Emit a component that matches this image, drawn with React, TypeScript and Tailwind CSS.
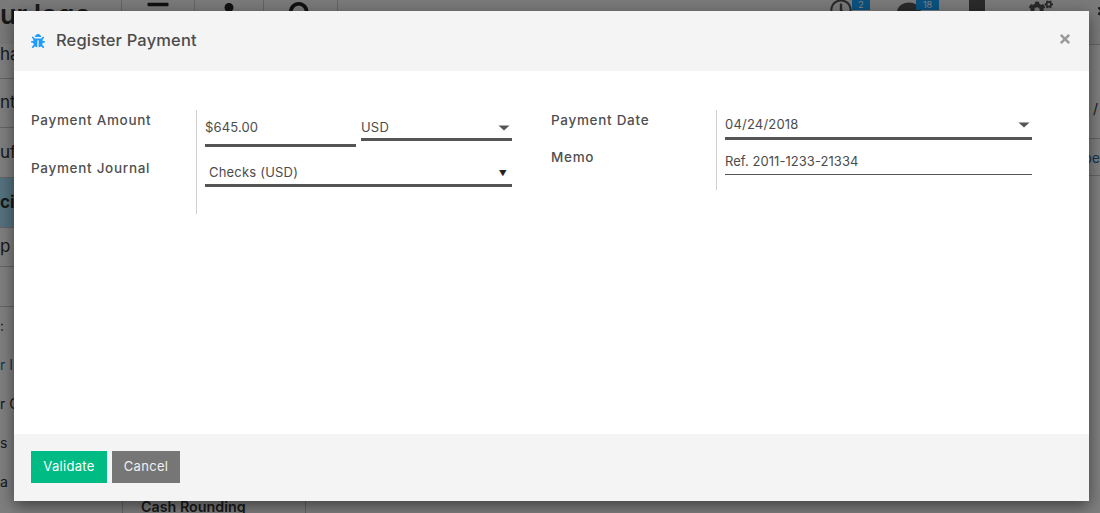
import React from "react";
import { FaBug, FaRegClock, FaComment, FaCogs, FaSearch, FaUser, FaBars, FaTimes } from "react-icons/fa";

function Arrow() {
  return (
    <svg width="12" height="6" viewBox="0 0 12 6" className="shrink-0">
      <path d="M0.5 0.5h11L6 5.5z" fill="#555" />
    </svg>
  );
}

function SideRow({ text, h, className = "" }: { text: string; h: string; className?: string }) {
  return (
    <div className={`${h} flex items-center border-b border-[#c9c9c9] text-[17px] text-[#333] ${className}`}>
      <span className="whitespace-nowrap">{text}</span>
    </div>
  );
}

function Background() {
  return (
    <div className="h-[513px] w-[1100px] overflow-hidden bg-white font-['Inter',sans-serif]">
      <div className="flex h-[44px] items-start overflow-hidden bg-[#f4f4f4]">
        <div className="w-[121px] shrink-0 overflow-hidden whitespace-nowrap text-[27px] font-semibold leading-[30px] text-[#333]">ur logo</div>
        <div className="flex h-full w-[73px] shrink-0 justify-center border-l border-[#c9c9c9] text-[#222]">
          <FaBars size={24} className="mt-[-15px]" />
        </div>
        <div className="flex h-full w-[69px] shrink-0 justify-center border-l border-[#c9c9c9] text-[#222]">
          <FaUser size={18} className="mt-[3px]" />
        </div>
        <div className="flex h-full w-[75px] shrink-0 justify-center border-x border-[#c9c9c9] text-[#222]">
          <FaSearch size={24} className="mt-[2px]" />
        </div>
        <div className="flex flex-1 items-start pl-[492px] text-[#555]">
          <FaRegClock size={22} className="mt-[-1px] shrink-0" />
          <span className="flex h-[10px] w-[18px] shrink-0 items-end justify-center overflow-hidden bg-[#14a4ff] text-[9px] leading-[10px] text-white">2</span>
          <FaComment size={24} className="ml-[27px] mt-[1px] shrink-0" />
          <span className="ml-[-5px] flex h-[10px] w-[23px] shrink-0 items-end justify-center overflow-hidden bg-[#14a4ff] text-[9px] leading-[10px] text-white">18</span>
          <span className="ml-[30px] h-[12px] w-[16px] shrink-0 bg-[#555]" />
          <FaCogs size={24} className="ml-[44px] mt-[-2px] shrink-0" />
          <FaTimes size={12} className="ml-[43px] mt-[5px] shrink-0 text-[#333]" />
        </div>
      </div>
      <div className="flex">
        <div className="w-[123px] shrink-0 border-r border-[#c9c9c9]">
          <SideRow text="ha" h="h-[35px] pb-[12px]" />
          <SideRow text="nt" h="h-[49px]" />
          <SideRow text="ufa" h="h-[50px]" />
          <SideRow text="ci" h="h-[50px]" className="bg-[#a8e4ff] font-bold" />
          <SideRow text="p" h="h-[39px]" />
          <div className="h-[40px] border-b border-[#c9c9c9]" />
          <div className="mt-[-1px] text-[14px] leading-[39px] whitespace-nowrap">
            <div className="text-[#333]">:</div>
            <div className="text-[#1a6ea8]">r In</div>
            <div className="text-[#333]">r O</div>
            <div className="text-[#333]">s</div>
            <div className="text-[#333]">a</div>
          </div>
        </div>
        <div className="flex h-[469px] flex-1 flex-col border-t border-[#c9c9c9]">
          <div className="flex h-[94px] items-center justify-end border-b border-[#c9c9c9] pr-[2px] pt-[34px] text-[14px] text-[#333]">/</div>
          <div className="flex h-[37px] items-center justify-end overflow-hidden border-b border-[#c9c9c9] text-[14px] text-[#1a6ea8]">
            <span>pe</span>
          </div>
          <div className="flex-1" />
          <div className="flex h-[21px] text-[14.3px] font-semibold leading-[12px] text-[#333]">
            <div className="w-[183px] whitespace-nowrap border-r border-[#c9c9c9] pl-[18px] pt-[9px]">Cash Rounding</div>
            <div className="h-[9px] w-[513px] border-r border-[#c9c9c9]" />
          </div>
        </div>
      </div>
    </div>
  );
}

function Label({ children, className = "" }: { children: React.ReactNode; className?: string }) {
  return <div className={`text-[13.5px] font-medium leading-[20px] tracking-[0.7px] text-[#505050] ${className}`}>{children}</div>;
}

export default function App() {
  return (
    <div className="relative h-[513px] w-[1100px] overflow-hidden">
      <Background />
      <div className="absolute inset-0 bg-black/50" />
      <div className="absolute left-[14px] top-[11px] flex h-[490px] w-[1075px] flex-col bg-white font-['Inter',sans-serif] shadow-[0_5px_15px_rgba(0,0,0,0.5)]">
        <div className="flex h-[60px] shrink-0 items-center bg-[#f4f4f4] pb-[2px] pl-[17px] pr-[18px]">
          <FaBug size={14} className="mt-[1px] text-[#1e9bff]" />
          <div className="ml-[11px] flex-1 text-[16.5px] font-medium tracking-[0.15px] text-[#4c4c4c]">Register Payment</div>
          <FaTimes size={14} className="mr-[-1px] mt-[-2px] text-[#9a9a9a]" />
        </div>
        <div className="flex flex-1 gap-[39px] pl-[17px] pt-[39px]">
          <div className="flex w-[481px] items-start">
            <div className="w-[165px] shrink-0">
              <Label>Payment Amount</Label>
              <Label className="mt-[28px]">Payment Journal</Label>
            </div>
            <div className="h-[104px] w-[316px] border-l border-[#d0d0d0] pl-[8px]">
              <div className="flex items-start gap-[5px]">
                <div className="flex h-[37px] w-[151px] items-center border-b-[3px] border-[#555] pt-[1px] text-[13px] tracking-[0.15px] text-[#4c4c4c]">
                  $645.00
                </div>
                <div className="flex h-[31px] w-[151px] items-center justify-between border-b-[3px] border-[#555] pr-[2px] pt-[7px] text-[13px] tracking-[0.2px] text-[#4c4c4c]">
                  USD
                  <Arrow />
                </div>
              </div>
              <div className="mt-[14px] flex h-[26px] w-[307px] items-center justify-between border-b-[3px] border-[#555] pl-[4px] pr-[5px] text-[13px] tracking-[0.2px] text-[#4c4c4c]">
                Checks (USD)
                <span className="text-[8px] leading-none text-[#222]">▼</span>
              </div>
            </div>
          </div>
          <div className="flex w-[481px] items-start">
            <div className="w-[165px] shrink-0">
              <Label>Payment Date</Label>
              <Label className="mt-[17px]">Memo</Label>
            </div>
            <div className="h-[80px] w-[316px] border-l border-[#d0d0d0] pl-[8px]">
              <div className="flex h-[30px] w-[307px] items-center justify-between border-b-[3px] border-[#555] pr-[2px] pt-[2px] text-[13px] tracking-[0.2px] text-[#4c4c4c]">
                04/24/2018
                <Arrow />
              </div>
              <div className="flex h-[35px] w-[307px] items-center border-b border-[#555] pt-[10px] text-[13px] tracking-[0.05px] text-[#4c4c4c]">
                Ref. 2011-1233-21334
              </div>
            </div>
          </div>
        </div>
        <div className="flex h-[67px] shrink-0 items-start gap-[5px] bg-[#f4f4f4] pl-[17px] pt-[17px]">
          <div className="flex h-[32px] w-[76px] items-center justify-center bg-[#00bb84] text-[13px] tracking-[0.3px] text-white">Validate</div>
          <div className="flex h-[32px] w-[68px] items-center justify-center bg-[#767676] text-[13px] tracking-[0.3px] text-[#f0f0f0]">Cancel</div>
        </div>
      </div>
    </div>
  );
}
